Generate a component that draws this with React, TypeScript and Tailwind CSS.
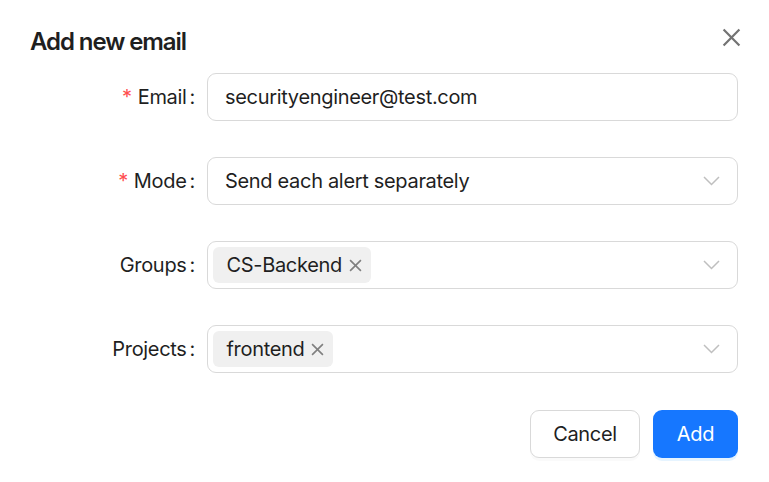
import React from "react"

const font = { fontFamily: "Inter, 'Noto Sans', sans-serif" }

function Chevron() {
  return (
    <svg width="17" height="10" viewBox="0 0 17 10" className="shrink-0">
      <path d="M1 1 L8.5 8.5 L16 1" fill="none" stroke="#bfbfbf" strokeWidth="1.5" />
    </svg>
  )
}

function SmallX({ size = 12, color = "#808080", stroke = 1.5 }: { size?: number; color?: string; stroke?: number }) {
  return (
    <svg width={size} height={size} viewBox="0 0 12 12">
      <path d="M1 1 L11 11 M11 1 L1 11" stroke={color} strokeWidth={stroke} fill="none" />
    </svg>
  )
}

function Label({ text, required }: { text: string; required?: boolean }) {
  return (
    <div className="flex items-center justify-end text-[20px] text-[#1f1f1f]">
      {required && <span className="mr-[6px] text-[#ff4d4f]">*</span>}
      <span>{text}</span>
      <span className="ml-[3px] mr-[12px]">:</span>
    </div>
  )
}

function Tag({ text }: { text: string }) {
  return (
    <span className="flex h-[36px] items-center gap-[7px] rounded-[6px] bg-[#f0f0f0] pl-[14px] pr-[9px] text-[20px] text-[#1f1f1f]">
      {text}
      <SmallX size={13} />
    </span>
  )
}

export default function App() {
  return (
    <div className="h-[482px] w-[769px] bg-white px-[30px] pt-[24px] tracking-[-0.02em]" style={font}>
      {/* Header */}
      <div className="flex h-[36px] items-start justify-between">
        <h1 className="text-[24px] font-semibold leading-[36px] tracking-[-0.045em] text-[#1f1f1f]">Add new email</h1>
        <button className="-mr-[3px] mt-[2px] flex h-[22px] w-[22px] items-center justify-center">
          <SmallX size={19} color="#737373" stroke={1.4} />
        </button>
      </div>

      {/* Form */}
      <div className="mt-[13px] grid grid-cols-[177px_1fr] gap-y-[36px] pr-[1px]">
        <Label text="Email" required />
        <div className="flex h-[48px] items-center rounded-[9px] border-[1.5px] border-[#d9d9d9] pl-[17px] text-[20px] text-[#1f1f1f]">
          securityengineer@test.com
        </div>

        <Label text="Mode" required />
        <div className="flex h-[48px] items-center justify-between rounded-[9px] border-[1.5px] border-[#d9d9d9] pl-[17px] pr-[17px] text-[20px] text-[#1f1f1f]">
          <span>Send each alert separately</span>
          <Chevron />
        </div>

        <Label text="Groups" />
        <div className="flex h-[48px] items-center justify-between rounded-[9px] border-[1.5px] border-[#d9d9d9] pl-[4.5px] pr-[17px]">
          <Tag text="CS-Backend" />
          <Chevron />
        </div>

        <Label text="Projects" />
        <div className="flex h-[48px] items-center justify-between rounded-[9px] border-[1.5px] border-[#d9d9d9] pl-[4.5px] pr-[17px]">
          <Tag text="frontend" />
          <Chevron />
        </div>
      </div>

      {/* Footer */}
      <div className="mt-[37px] flex justify-end gap-[13px] pr-[1px]">
        <button className="h-[48px] w-[110px] rounded-[9px] border-[1.5px] border-[#d9d9d9] bg-white text-[20px] text-[#1f1f1f] shadow-[0_3px_0_rgba(0,0,0,0.02)]">
          Cancel
        </button>
        <button className="h-[48px] w-[85px] rounded-[9px] bg-[#1677ff] text-[20px] text-white shadow-[0_3px_0_rgba(5,145,255,0.1)]">
          Add
        </button>
      </div>
    </div>
  )
}
